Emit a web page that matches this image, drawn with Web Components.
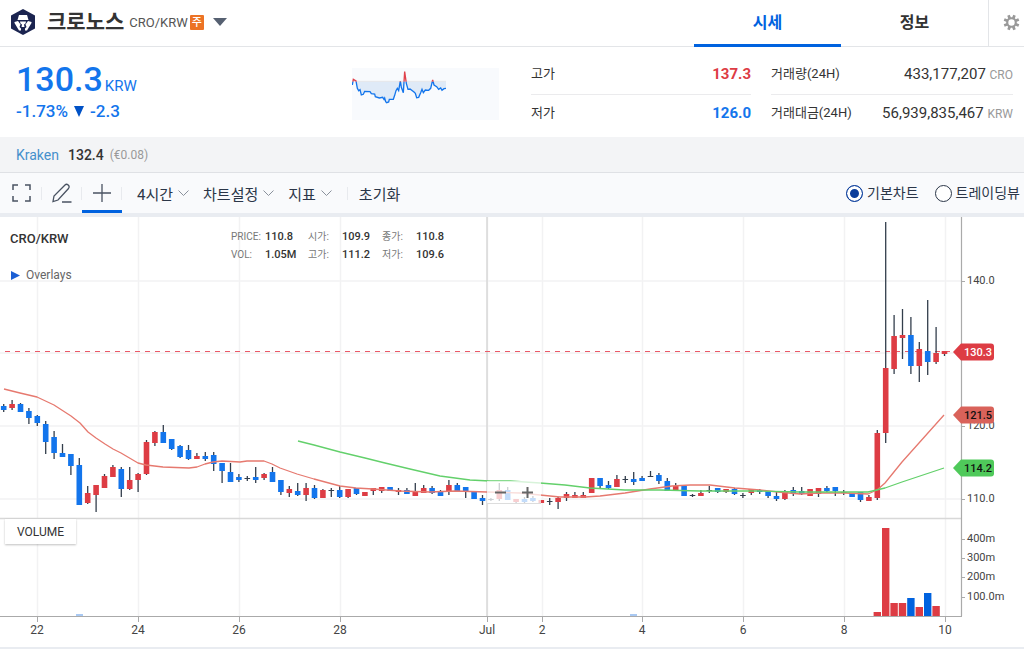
<!DOCTYPE html>
<html lang="ko">
<head>
<meta charset="utf-8">
<meta name="viewport" content="width=device-width, initial-scale=1">
<title>크로노스 CRO/KRW</title>
<style>
  body {
    margin: 0;
    background: #fff;
    color: #333;
    font-family: Roboto, "Noto Sans CJK KR", sans-serif;
    font-size: 14px;
  }
</style>
</head>
<body>
<coin-header name="크로노스" pair="CRO/KRW"></coin-header>
<main>
  <coin-summary>
    <coin-stat label="고가" value="137.3" tone="up"></coin-stat>
    <coin-stat label="거래량(24H)" value="433,177,207" unit="CRO"></coin-stat>
    <coin-stat label="저가" value="126.0" tone="down"></coin-stat>
    <coin-stat label="거래대금(24H)" value="56,939,835,467" unit="KRW"></coin-stat>
  </coin-summary>
  <exchange-bar><a slot="name" href="#kraken">Kraken</a><b slot="price">132.4</b><span slot="foreign">(€0.08)</span></exchange-bar>
  <chart-toolbar></chart-toolbar>
  <candle-chart></candle-chart>
</main>

<script>
class CoinHeader extends HTMLElement {
  connectedCallback() {
    this.attachShadow({ mode: 'open' });
    this.shadowRoot.innerHTML = `
      <style>
        :host { display: block; }
        header {
          display: flex;
          align-items: stretch;
          height: 46px;
          border-bottom: 1px solid #e3e5e8;
        }
        .coin {
          flex: 1;
          display: flex;
          align-items: center;
          padding: 0 0 2px 10px;
        }
        .coin svg { flex: none; }
        h1 { margin: 0 5px 0 11px; font-size: 21px; line-height: 28px; font-weight: 700; }
        .pair { color: #555; font-size: 13px; }
        .badge {
          margin: 0 9px 0 2px;
          width: 14px;
          height: 15px;
          border-radius: 1px;
          background: #ec7325;
          color: #fff;
          font-size: 11px;
          font-weight: 500;
          line-height: 15px;
          text-align: center;
        }
        button { border: 0; padding: 0; background: none; font: inherit; cursor: pointer; }
        button svg { display: block; }
        nav { display: flex; margin-bottom: -1px; }
        nav a {
          width: 147px;
          padding-top: 1px;
          line-height: 43px;
          text-align: center;
          text-decoration: none;
          color: #333;
          font-size: 16px;
          font-weight: 700;
          border-bottom: 3px solid transparent;
        }
        nav a[aria-current] { color: #0062df; border-color: #0062df; }
        .settings { width: 36px; border-left: 1px solid #e3e5e8; padding: 0 0 1px 14px; }
      </style>
      <header>
        <div class="coin">
          <svg width="26" height="28" viewBox="0 0 26 28" aria-hidden="true">
            <path d="M13 1 25 7.500V20.500L13 27 1 20.500V7.500Z" fill="#1b2450"/>
            <path d="M9 7h8l1.500 5h-11Z" fill="#fff"/>
            <path d="M4.500 14 8 13l2.500 3.500-1 2.500 1.500 1.500v2L9 22.500 4.500 15ZM21.500 14 18 13l-2.500 3.500 1 2.500-1.500 1.500v2l2 0 4.500-7.500Z" fill="#fff"/>
            <path d="M10 13.500h6l-.5 2-1.500 1 .5 2.500h-3l.5-2.500-1.500-1Z" fill="#fff"/>
          </svg>
          <h1>${this.getAttribute('name')}</h1>
          <span class="pair">${this.getAttribute('pair')}</span>
          <span class="badge">주</span>
          <button aria-label="코인 선택"><svg width="14" height="8" viewBox="0 0 14 8"><path d="M0 0h14L7 8Z" fill="#566071"/></svg></button>
        </div>
        <nav>
          <a href="#price" aria-current="page">시세</a>
          <a href="#info">정보</a>
        </nav>
        <button class="settings" aria-label="설정">
          <svg width="17" height="17" viewBox="0 0 24 24" fill="#999"><path d="M19.400 13a7.500 7.500 0 0 0 0-2L23 9.500 21.600 6l-3.500 1.300-1.400-1.400L18 2.400 14.500 1 13 4.500h-2L9.500 1 6 2.400l1.300 3.500-1.400 1.400L2.400 6 1 9.500 4.500 11v2L1 14.500 2.400 18l3.500-1.300 1.400 1.400L6 21.600 9.500 23l1.500-3.500h2l1.500 3.500 3.500-1.400-1.300-3.500 1.400-1.400 3.500 1.300 1.400-3.500ZM12 16.500a4.500 4.500 0 1 1 0-9 4.500 4.500 0 0 1 0 9Z" fill-rule="evenodd"/></svg>
        </button>
      </header>
    `;
  }
}

class CoinSummary extends HTMLElement {
  connectedCallback() {
    this.attachShadow({ mode: 'open' });
    const line = '37,105 40,88 48,93 52,115 56,122 60,119 64,135 70,133 74,124 90,125 94,131 104,132 106,140 118,144 128,142 132,148 134,144 137,155 140,158 146,156 148,148 160,148 164,136 168,122 172,115 176,122 181,93 184,112 190,128 194,65 199,100 204,118 210,117 222,126 226,130 230,143 236,142 242,128 246,118 250,128 256,120 266,121 272,115 278,90 282,105 290,110 296,118 302,114 306,121 312,116 318,115';
    this.shadowRoot.innerHTML = `
      <style>
        :host {
          display: flex;
          padding: 17px 11px 12px 16px;
          color: #1375ec;
        }
        .price { flex: 1; }
        p { margin: 0; display: flex; }
        .now {
          align-items: baseline;
          gap: 2px;
          font-size: 34px;
          font-weight: 500;
          line-height: 30px;
        }
        .now small { font-size: 15px; font-weight: 400; line-height: 15px; }
        .change {
          align-items: center;
          gap: 6px;
          margin-top: 8px;
          font-size: 17px;
          font-weight: 500;
          line-height: 18px;
        }
        .spark { margin: 4px 32px 0 0; background: #f8fafd; flex: none; }
        .stats {
          display: grid;
          grid-template-columns: 220px 242px;
          column-gap: 20px;
        }
      </style>
      <div class="price">
        <p class="now">130.3<small>KRW</small></p>
        <p class="change"><span>-1.73%</span><svg width="10" height="11" viewBox="0 0 10 11"><path d="M0 0h10L5 11Z" fill="#0052c6"/></svg><span>-2.3</span></p>
      </div>
      <svg class="spark" width="147" height="52" viewBox="36 54 441 156" aria-hidden="true">
        <clipPath id="above"><rect x="36" y="54" width="441" height="41"/></clipPath>
        <clipPath id="below"><rect x="36" y="95" width="441" height="115"/></clipPath>
        <polygon points="37,95 ${line} 318,95" fill="#dfeaf7" clip-path="url(#below)"/>
        <path d="M36 94H318" stroke="#e3e5e8" stroke-width="3"/>
        <g fill="none" stroke-width="4">
          <polyline points="${line}" stroke="#e0414b" clip-path="url(#above)"/>
          <polyline points="${line}" stroke="#1375ec" clip-path="url(#below)"/>
        </g>
      </svg>
      <div class="stats"><slot></slot></div>
    `;
  }
}

class CoinStat extends HTMLElement {
  connectedCallback() {
    this.attachShadow({ mode: 'open' });
    const unit = this.getAttribute('unit');
    this.shadowRoot.innerHTML = `
      <style>
        :host {
          display: flex;
          justify-content: space-between;
          height: 30px;
          border-bottom: 1px solid #ebebed;
          color: #333;
          font-size: 13px;
          line-height: 19px;
        }
        :host(:nth-child(n+3)) { border: 0; padding-top: 8px; height: 22px; }
        strong { font-size: 15px; font-weight: 400; line-height: 21px; }
        :host([tone]) strong { font-weight: 700; }
        :host([tone=up]) strong { color: #dd3c44; }
        :host([tone=down]) strong { color: #1375ec; }
        small { font-size: 12px; font-weight: 400; color: #999; }
      </style>
      <span>${this.getAttribute('label')}</span>
      <strong>${this.getAttribute('value')}${unit ? ` <small>${unit}</small>` : ''}</strong>
    `;
  }
}

class ExchangeBar extends HTMLElement {
  connectedCallback() {
    this.attachShadow({ mode: 'open' });
    this.shadowRoot.innerHTML = `
      <style>
        :host {
          display: flex;
          align-items: center;
          height: 35px;
          padding-left: 16px;
          background: #f3f4f6;
          border-bottom: 1px solid #dfe1e5;
        }
        ::slotted(a) { color: #4590cc; text-decoration: none; margin-right: 9px; }
        ::slotted(b) { font-weight: 500; margin-right: 6px; }
        ::slotted(span) { color: #999; font-size: 12px; }
      </style>
      <slot name="name"></slot><slot name="price"></slot><slot name="foreign"></slot>
    `;
  }
}

class ChartToolbar extends HTMLElement {
  connectedCallback() {
    this.attachShadow({ mode: 'open' });
    const chevron = '<svg width="11" height="6" viewBox="0 0 11 6"><path d="m.5.5 5 5 5-5" fill="none" stroke="#8a919c"/></svg>';
    this.shadowRoot.innerHTML = `
      <style>
        :host {
          display: flex;
          height: 40px;
          background: #f9fafc;
          border-bottom: 4px solid #e9ecf1;
          color: #2b3648;
        }
        button {
          display: flex;
          align-items: center;
          border: 0;
          padding: 0;
          background: none;
          color: inherit;
          font: inherit;
          font-size: 15px;
          cursor: pointer;
        }
        .tool { position: relative; width: 40px; justify-content: center; }
        .tool:first-of-type { width: 42px; }
        .tool::after, .menu.last::after {
          content: '';
          width: 1px;
          height: 13px;
          background: #e8eaee;
          position: absolute;
          right: 0;
        }
        .tool[aria-pressed=true] { border-bottom: 3px solid #0062df; padding-top: 3px; }
        .menus { flex: 1; display: flex; gap: 14px; margin-left: 15px; }
        .menu { gap: 5px; }
        .menu.last { position: relative; padding-right: 16px; margin-right: -3px; }
        .views { display: flex; gap: 16px; align-items: center; padding-right: 4px; }
        label { display: flex; align-items: center; gap: 4px; padding-bottom: 2px; }
        input {
          appearance: none;
          width: 17px;
          height: 17px;
          margin: 2px 0 0;
          border: 1px solid #2b3648;
          border-radius: 50%;
          background: #fff;
        }
        input:checked { border-color: #0c3e9c; box-shadow: inset 0 0 0 3px #fff; background: #0c3e9c; }
      </style>
      <button class="tool" aria-label="전체화면">
        <svg width="19" height="18" viewBox="0 0 19 18" fill="none" stroke="#4a5362" stroke-width="1.500"><path d="M1 6V1h5M13 1h5v5M18 12v5h-5M6 17H1v-5"/></svg>
      </button>
      <button class="tool" aria-label="그리기">
        <svg width="20" height="20" viewBox="0 0 20 20" fill="none" stroke="#4a5362" stroke-width="1.300"><path d="M1 18.500 2 13 13 2q1.500-1.500 3.200 0t.3 3.500L6 17ZM10 19h9.500"/></svg>
      </button>
      <button class="tool" aria-label="십자선" aria-pressed="true">
        <svg width="18" height="18" viewBox="0 0 18 18" stroke="#4a5362" stroke-width="1.300"><path d="M9 0v18M0 9h18"/></svg>
      </button>
      <div class="menus">
        <button class="menu">4시간 ${chevron}</button>
        <button class="menu">차트설정 ${chevron}</button>
        <button class="menu last">지표 ${chevron}</button>
        <button>초기화</button>
      </div>
      <div class="views">
        <label><input type="radio" name="view" checked>기본차트</label>
        <label><input type="radio" name="view">트레이딩뷰</label>
      </div>
    `;
  }
}

// wick top, body top, body bottom, wick bottom, direction (u = up, d = down, n = flat)
const CANDLES = `404 406 410 412 d,400 404 408 410 u,403 404 412 412 d,408 411 418 424 d,415 416 423 426 d,
421 424 442 454 d,431 437 453 459 d,444 453 457 457 d,454 454 466 475 d,458 465 505 505 d,
486 493 503 504 u,485 485 495 512 u,474 476 488 488 u,465 467 477 477 u,467 469 489 497 d,
467 480 489 490 u,473 474 480 492 u,440 442 474 475 u,431 432 443 446 u,425 432 443 443 d,
439 439 449 450 d,445 446 457 458 d,445 450 459 460 d,453 456 459 459 u,452 456 459 461 d,
452 455 464 471 d,463 463 471 483 d,463 472 482 482 d,474 477 480 482 d,476 478 479 481 n,
467 477 480 483 d,473 474 478 480 u,467 472 482 482 d,480 480 492 495 d,486 489 493 497 u,
483 491 495 496 d,483 488 495 501 u,485 488 498 499 d,489 490 498 498 u,488 490 491 497 n,
486 490 497 498 d,489 489 497 498 u,488 488 494 495 d,492 492 496 496 u,488 488 491 495 u,
487 487 491 493 u,487 487 491 491 d,488 490 492 495 u,488 490 494 494 d,483 492 496 496 u,
485 488 493 493 u,486 488 493 494 d,490 492 496 496 d,480 485 491 495 u,483 485 491 492 d,
487 487 491 498 d,491 491 499 499 d,495 498 501 505 d,498 499 500 501 n,483 490 499 501 u,
487 490 500 500 d,499 499 502 503 u,497 499 502 503 d,496 498 501 502 d,500 500 503 503 u,
498 501 502 505 n,497 498 502 509 u,492 494 498 501 u,492 495 498 498 u,492 495 498 498 u,
478 478 493 493 u,478 478 486 488 d,481 485 488 489 d,475 479 487 487 u,476 479 480 483 n,
472 479 482 485 d,476 478 481 481 d,471 476 477 477 n,473 475 481 484 d,478 481 491 491 d,
483 486 490 491 u,486 486 496 496 d,494 495 496 497 n,490 493 496 496 u,486 490 491 493 n,
488 488 492 493 d,489 489 492 493 u,488 489 494 495 d,493 495 496 498 n,489 489 493 495 u,
489 490 492 494 d,491 491 496 498 d,492 496 499 501 d,490 492 499 500 u,487 490 493 496 d,
487 491 494 495 d,489 489 496 496 u,488 488 494 497 u,486 488 491 492 d,487 487 491 496 d,
490 492 493 495 n,493 493 497 497 d,492 492 500 502 d,495 497 501 501 u,430 433 498 500 u,
222 368 433 443 u,315 336 369 374 u,309 335 338 359 u,317 335 366 374 d,342 349 366 382 u,
300 351 362 375 d,327 353 362 364 u,351 351 354 356 u`;

// candle index, bar top, direction
const VOLUMES = [[104, 612, 'u'], [105, 528, 'u'], [106, 603, 'u'], [107, 603, 'u'],
  [108, 598, 'd'], [109, 607, 'u'], [110, 593, 'd'], [111, 606, 'u']];

const MA_FAST = '4,389 20,393 37,397 54,405 71,416 80,423 88,432 96,438 105,444 113,449 121,453 138,463 146,465 163,467 189,468 197,467 205,464 213,462 222,461 240,462 247,461 264,461 272,464 280,468 297,474 314,479 340,486 356,488 373,489 400,491 430,492 455,491 487,492 520,493 540,495 560,497 585,497 600,496 625,493 650,489 672,486 690,485 710,485 735,488 760,490 778,492 800,494 820,493 845,493 868,494 877,490 885,483 902,462 944,415';
const MA_SLOW = '298,441 314,445 340,452 365,458 385,463 410,469 440,476 470,480 490,481 510,481 540,483 565,485 590,488 625,490 660,490 700,491 760,491 800,492 868,492 885,488 902,482 944,468';

class CandleChart extends HTMLElement {
  connectedCallback() {
    this.attachShadow({ mode: 'open' });
    const x = i => 3.7 + i * 8.4;
    const candles = CANDLES.split(',').map((row, i) => {
      const [high, top, bottom, low, dir] = row.trim().split(' ');
      return `<path class="wick" d="M${x(i)} ${high}V${low}"/>
        <rect class="${dir}" x="${x(i) - 2.8}" y="${top}" width="5.6" height="${bottom - top}"/>`;
    }).join('');
    const bars = VOLUMES.map(([i, y, dir]) =>
      `<rect class="${dir}" x="${x(i) - 3.7}" y="${y}" width="7.4" height="${616 - y}"/>`).join('');
    const days = [[37, '22'], [138, '24'], [239, '26'], [340, '28'], [487, 'Jul'], [542, '2'], [642, '4'], [743, '6'], [844, '8'], [945, '10']];
    const levels = [[281, '140.0'], [426, '120.0'], [499, '110.0'], [539, '400m'], [558, '300m'], [577, '200m'], [597, '100.0m']];
    const tag = (y, text, tone) => `
      <g class="tag ${tone}">
        <path d="M953 ${y}l8-8.500h30q3 0 3 3v11q0 3-3 3h-30Z"/>
        <text x="964" y="${y + 4}">${text}</text>
      </g>`;

    this.shadowRoot.innerHTML = `
      <style>
        :host {
          display: block;
          position: relative;
          border-bottom: 2px solid #e9ecf1;
        }
        .plot { display: block; width: 100%; height: auto; }
        .grid { stroke: #f2f2f3; stroke-width: 1.5; fill: none; }
        .axis { stroke: #aaa; fill: none; }
        .current { stroke: #ea5a68; stroke-width: 1.2; stroke-dasharray: 5 5; }
        .wick { stroke: #333e4c; stroke-width: 1.3; }
        .u { fill: #dd3c44; }
        .d { fill: #1375ec; }
        .n { fill: #333e4c; }
        .volume .d { fill: #0062df; }
        .ma { fill: none; stroke-width: 1.3; stroke-linejoin: round; }
        text { font-size: 11px; fill: #444; }
        .day { font-size: 12px; text-anchor: middle; }
        .tag text { font-weight: 500; fill: #111; }
        .last path { fill: #dd3c44; }
        .last text { fill: #fff; }
        .fast path { fill: #d9625a; }
        .slow path { fill: #4fc95a; }
        h2 {
          position: absolute;
          left: 10px;
          top: 14px;
          margin: 0;
          font-size: 13px;
          font-weight: 500;
          line-height: 16px;
        }
        button { border: 0; padding: 0; background: none; color: #666; font: inherit; cursor: pointer; }
        .overlays {
          position: absolute;
          left: 11px;
          top: 51px;
          display: flex;
          align-items: center;
          gap: 6px;
          font-size: 12px;
          line-height: 14px;
        }
        dl {
          position: absolute;
          left: 231px;
          top: 11px;
          margin: 0;
          display: grid;
          grid-template-columns: 34px 43px 34px 40px 34px 40px;
          font-size: 11px;
          line-height: 18px;
        }
        dt { font-size: 10px; color: #777; }
        dd { margin: 0; font-weight: 500; }
        .volume-label {
          position: absolute;
          left: 5px;
          top: 302px;
          width: 71px;
          height: 25px;
          background: #fff;
          box-shadow: 0 1px 2px rgba(0, 0, 0, 0.25);
          color: #333;
          font-size: 12px;
          line-height: 24px;
          text-align: center;
        }
        .zoom {
          position: absolute;
          left: 487px;
          top: 264px;
          display: flex;
          background: rgba(255, 255, 255, 0.75);
          border-bottom: 1px solid #ddd;
        }
        .zoom button { width: 27px; height: 22px; }
        .zoom svg { display: block; margin: auto; }
      </style>
      <svg class="plot" viewBox="0 217 1024 430" role="img" aria-label="CRO/KRW">
        <g class="grid">
          ${days.map(([d]) => `<path d="M${d}.500 217V616"/>`).join('')}
          <path d="M0 281H961M0 353H961M0 426H961M0 499H961"/>
        </g>
        <path d="M487 217V616M0 518.500H961" stroke="#d8d8d8" stroke-width="1.500"/>
        <path class="current" d="M5 351.500H953"/>
        ${candles}
        <polyline class="ma" points="${MA_FAST}" stroke="#e6796f"/>
        <polyline class="ma" points="${MA_SLOW}" stroke="#63d06b"/>
        <g class="volume">
          ${bars}
          <path d="M76 615h7M630 615h7" stroke="#a9c9f3" stroke-width="2"/>
        </g>
        <path class="axis" d="M961.500 217V616M0 616.500H962" stroke-width="1.200"/>
        ${days.map(([d, t]) => `<path class="axis" d="M${d}.500 616v6"/><text class="day" x="${d}" y="634">${t}</text>`).join('')}
        ${levels.map(([y, t]) => `<path class="axis" d="M962 ${y}.500h3"/><text x="967" y="${y + 3}">${t}</text>`).join('')}
        ${tag(352, '130.3', 'last')}
        ${tag(415, '121.5', 'fast')}
        ${tag(468, '114.2', 'slow')}
      </svg>
      <h2>CRO/KRW</h2>
      <button class="overlays"><svg width="9" height="9" viewBox="0 0 9 9"><path d="M0 0 9 4.500 0 9Z" fill="#1c5fd4"/></svg>Overlays</button>
      <dl>
        <dt>PRICE:</dt><dd>110.8</dd><dt>시가:</dt><dd>109.9</dd><dt>종가:</dt><dd>110.8</dd>
        <dt>VOL:</dt><dd>1.05M</dd><dt>고가:</dt><dd>111.2</dd><dt>저가:</dt><dd>109.6</dd>
      </dl>
      <button class="volume-label">VOLUME</button>
      <div class="zoom">
        <button aria-label="축소"><svg width="11" height="11" viewBox="0 0 11 11"><path d="M0 5.500h11" stroke="#666" stroke-width="2"/></svg></button>
        <button aria-label="확대"><svg width="11" height="11" viewBox="0 0 11 11"><path d="M0 5.500h11M5.500 0v11" stroke="#666" stroke-width="2"/></svg></button>
      </div>
    `;
  }
}

customElements.define('coin-header', CoinHeader);
customElements.define('coin-summary', CoinSummary);
customElements.define('coin-stat', CoinStat);
customElements.define('exchange-bar', ExchangeBar);
customElements.define('chart-toolbar', ChartToolbar);
customElements.define('candle-chart', CandleChart);
</script>
</body>
</html>
